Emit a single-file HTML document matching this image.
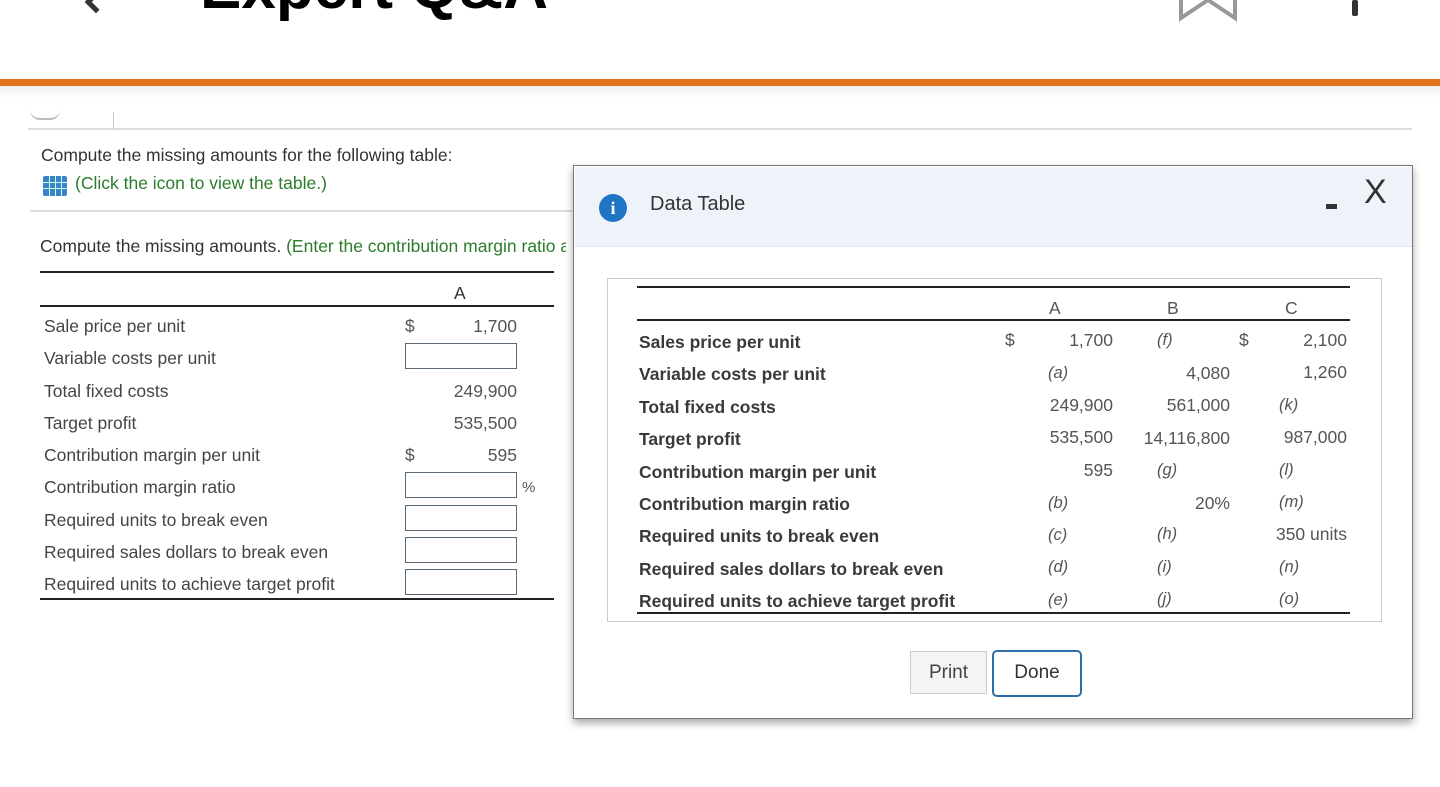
<!DOCTYPE html>
<html><head><meta charset="utf-8"><style>
*{margin:0;padding:0;box-sizing:border-box}
body{width:1440px;height:787px;background:#fff;position:relative;overflow:hidden;font-family:"Liberation Sans",sans-serif;color:#333}
.a{position:absolute;white-space:nowrap}
.l{font-size:17.5px;color:#333}
.inp{position:absolute;width:112px;height:26px;border:1.5px solid #5a6a78;background:#fff}
.hr{position:absolute;height:1.5px;background:#222}
.lt{font-size:17.5px;line-height:32.3px;color:#444}
.d{font-size:17.5px;line-height:32.4px;color:#3a3a3a;font-weight:bold}
.n{font-size:17.5px;line-height:32.4px;color:#555}
.i{font-size:16.5px;line-height:32.4px;color:#555;font-style:italic}
</style></head><body>
<div class="a" style="left:200px;top:-43px;font-size:62px;line-height:62px;font-weight:bold;color:#000">Expert Q&amp;A</div>
<div class="a" style="left:88px;top:-6px;width:16px;height:16px;border-left:5px solid #333;border-bottom:5px solid #333;transform:rotate(45deg)"></div>
<svg class="a" style="left:1176px;top:0" width="64" height="22"><path d="M5 -5V18L32 0L59 18V-5" fill="none" stroke="#999" stroke-width="4"/></svg>
<div class="a" style="left:1352px;top:0;width:6px;height:16px;background:#333;border-radius:2px"></div>
<div class="a" style="left:0;top:79px;width:1440px;height:7px;background:#e2731a"></div>
<div class="a" style="left:0;top:86px;width:1440px;height:12px;background:linear-gradient(#eee,#fff)"></div>
<div class="a" style="left:28px;top:128px;width:1384px;height:2px;background:#ddd"></div>
<div class="a" style="left:30px;top:110px;width:30px;height:10px;border-bottom:2px solid #bbb;border-radius:0 0 15px 15px"></div>
<div class="a" style="left:113px;top:112px;width:1px;height:18px;background:#ccc"></div>

<div class="a l" style="left:41px;top:145px">Compute the missing amounts for the following table:</div>
<div class="a" style="left:43px;top:176px;width:24px;height:20px;background:#3a82c9;border-radius:2px;background-image:linear-gradient(90deg,transparent 6px,#cfe 6px,#cfe 7px,transparent 7px,transparent 12px,#cfe 12px,#cfe 13px,transparent 13px,transparent 18px,#cfe 18px,#cfe 19px,transparent 19px),linear-gradient(transparent 6px,#cfe 6px,#cfe 7px,transparent 7px,transparent 12px,#cfe 12px,#cfe 13px,transparent 13px)"></div>
<div class="a l" style="left:75px;top:173px;color:#2b7d2b">(Click the icon to view the table.)</div>
<div class="a" style="left:30px;top:210px;width:545px;height:2px;background:#ddd"></div>
<div class="a" style="left:40px;top:236px;width:526px;overflow:hidden"><div class="l" style="white-space:nowrap">Compute the missing amounts. <span style="color:#2b7d2b">(Enter the contribution margin ratio as a percent)</span></div></div>
<div class="hr" style="left:40px;top:271px;width:514px"></div>
<div class="a" style="left:454px;top:283px;font-size:17.5px;color:#333">A</div>
<div class="hr" style="left:40px;top:305px;width:514px"></div>
<div class="hr" style="left:40px;top:598px;width:514px"></div>
<div class="a lt" style="left:44px;top:310px">Sale price per unit<br>Variable costs per unit<br>Total fixed costs<br>Target profit<br>Contribution margin per unit<br>Contribution margin ratio<br>Required units to break even<br>Required sales dollars to break even<br>Required units to achieve target profit</div>
<div class="a lt" style="left:405px;top:310px;color:#555">$</div>
<div class="a lt" style="left:405px;top:439px;color:#555">$</div>
<div class="a lt" style="right:923px;top:310px;text-align:right;color:#555">1,700<br><br>249,900<br>535,500<br>595</div>
<div class="inp" style="left:405px;top:343px"></div>
<div class="inp" style="left:405px;top:472px"></div>
<div class="inp" style="left:405px;top:505px"></div>
<div class="inp" style="left:405px;top:537px"></div>
<div class="inp" style="left:405px;top:569px"></div>
<div class="a" style="left:522px;top:479px;font-size:15px;color:#555">%</div>

<div class="a" style="left:573px;top:165px;width:840px;height:554px;background:#fff;border:1.5px solid #777;box-shadow:0 4px 8px rgba(0,0,0,.35)"></div>
<div class="a" style="left:575px;top:167px;width:837px;height:80px;background:#eef3fa;border-bottom:1px solid #dde6f0"></div>
<div class="a" style="left:599px;top:194px;width:28px;height:28px;border-radius:50%;background:#1f74c4;color:#fff;font:bold 18px 'Liberation Serif',serif;text-align:center;line-height:28px">i</div>
<div class="a" style="left:650px;top:193px;font-size:20px;color:#333">Data Table</div>
<div class="a" style="left:1326px;top:204px;width:11px;height:5px;background:#333"></div>
<div class="a" style="left:1364px;top:172px;font-size:34px;color:#333;line-height:40px">X</div>
<div class="a" style="left:607px;top:278px;width:775px;height:344px;border:1.5px solid #ccc"></div>
<div class="hr" style="left:637px;top:286px;width:713px"></div>
<div class="a n" style="left:1049px;top:292px">A</div>
<div class="a n" style="left:1167px;top:292px">B</div>
<div class="a n" style="left:1285px;top:292px">C</div>
<div class="hr" style="left:637px;top:319px;width:713px"></div>
<div class="hr" style="left:637px;top:612px;width:713px"></div>
<div class="a d" style="left:639px;top:326px">Sales price per unit<br>Variable costs per unit<br>Total fixed costs<br>Target profit<br>Contribution margin per unit<br>Contribution margin ratio<br>Required units to break even<br>Required sales dollars to break even<br>Required units to achieve target profit</div>
<div class="a n" style="left:1005px;top:324px">$</div>
<div class="a n" style="left:1239px;top:324px">$</div>
<div class="a n" style="right:327px;top:324px;text-align:right">1,700<br><br>249,900<br>535,500<br>595</div>
<div class="a i" style="left:1048px;top:357px">(a)<br><br><br><br>(b)<br>(c)<br>(d)<br>(e)</div>
<div class="a n" style="right:210px;top:357px;text-align:right">4,080<br>561,000<br>14,116,800<br><br>20%</div>
<div class="a i" style="left:1157px;top:324px">(f)<br><br><br><br>(g)<br><br>(h)<br>(i)<br>(j)</div>
<div class="a n" style="right:93px;top:324px;text-align:right">2,100<br>1,260<br><br>987,000<br><br><br>350 units</div>
<div class="a i" style="left:1279px;top:389px">(k)<br><br>(l)<br>(m)<br><br>(n)<br>(o)</div>
<div class="a" style="left:910px;top:651px;width:77px;height:43px;border:1px solid #ccc;background:#f4f4f4;font-size:19px;color:#444;text-align:center;line-height:41px">Print</div>
<div class="a" style="left:992px;top:650px;width:90px;height:47px;border:2.5px solid #2f6fa8;border-radius:5px;background:#fff;font-size:19px;color:#333;text-align:center;line-height:42px">Done</div>
</body></html>
